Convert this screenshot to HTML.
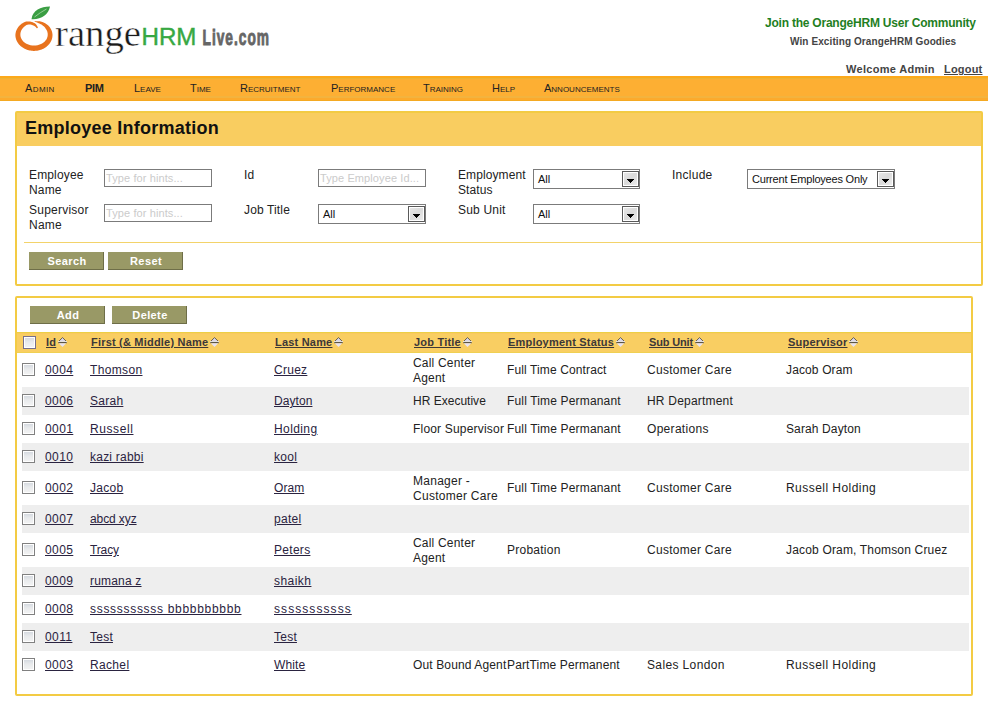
<!DOCTYPE html><html><head><meta charset="utf-8"><style>
*{margin:0;padding:0;box-sizing:border-box}
html,body{width:988px;height:704px;overflow:hidden;background:#fff;font-family:"Liberation Sans",sans-serif;color:#222}
.abs{position:absolute;white-space:nowrap}
.nav{position:absolute;left:0;top:76px;width:988px;height:25px;background:linear-gradient(180deg,#FDA91A 0,#FDA91A 2px,#EBB436 2px,#EBB436 3px,#FDAF33 3px,#FDAF33 20px,#F3B33E 20px,#F3B33E 22px,#FCAA2C 22px,#FCAA2C 24px,#F4A922 24px)}
.nv{position:absolute;top:83px;font-size:11px;font-variant:small-caps;color:#222;line-height:11px}
.box{position:absolute;border:2px solid #F3CB44;border-radius:2px;background:#fff}
.lbl{position:absolute;font-size:12px;line-height:15px;color:#222;white-space:nowrap;letter-spacing:0.1px}
.inp{position:absolute;height:18px;border:1px solid #7B7B7B;background:#fff;font-size:11px;color:#CBCBCB;padding-left:1px;letter-spacing:0.1px;line-height:16px;white-space:nowrap;overflow:hidden}
.sel{position:absolute;height:20px;border:1px solid #7B7B7B;background:#fff;font-size:11px;color:#111;white-space:nowrap}
.sel span{position:absolute;left:4px;top:4px;line-height:11px}
.sb{position:absolute;right:0;top:1px;width:17px;height:16px;border:1px solid #5A5A5A;background:linear-gradient(135deg,#E8E8E8,#DADADA 50%,#EEEEEE)}
.sb:before{content:"";position:absolute;left:0;top:0;right:0;bottom:0;border:1px solid #fff}
.sb svg{position:absolute;left:4px;top:7px}
.btn{position:absolute;height:18px;background:#999966;border-right:1px solid #6E6E48;border-bottom:1px solid #6E6E48;color:#fff;font-size:11px;font-weight:bold;text-align:center;line-height:19px;letter-spacing:0.4px;padding-left:2px}
.cb{position:absolute;width:13px;height:13px;border:1px solid #808080;background:linear-gradient(180deg,#D2D7DE,#E8EAEC 45%,#F4F4F4);box-shadow:inset 0 0 0 1px #fff}
.th{position:absolute;font-size:11px;font-weight:bold;text-decoration:underline;color:#3D3838;white-space:nowrap;line-height:11px;letter-spacing:0.2px}
.si{display:inline-block;width:9px;height:11px;vertical-align:-2px;margin-left:2px}
.row{position:absolute;left:17px;width:954px}
.td{position:absolute;font-size:12px;color:#222;white-space:nowrap;line-height:14px;letter-spacing:0.15px}
.lk{text-decoration:underline;color:#2A2340;letter-spacing:0.25px}
</style></head><body>
<svg class="abs" style="left:0;top:0" width="290" height="70" viewBox="0 0 290 70">
<path d="M34.57 21.36 L35.43 21.26 L36.30 21.20 L37.18 21.18 L38.06 21.20 L38.94 21.25 L39.82 21.35 L40.68 21.55 L41.53 21.78 L42.36 22.06 L43.18 22.37 L43.98 22.72 L44.76 23.11 L45.52 23.53 L46.25 23.99 L46.96 24.49 L47.65 25.02 L48.30 25.58 L48.91 26.19 L49.45 26.85 L49.96 27.53 L50.43 28.24 L50.86 28.97 L51.24 29.73 L51.57 30.51 L51.86 31.30 L52.09 32.11 L52.27 32.94 L52.41 33.77 L52.49 34.62 L52.49 35.47 L52.44 36.31 L52.34 37.16 L52.18 38.00 L51.96 38.82 L51.70 39.64 L51.39 40.44 L51.02 41.23 L50.61 41.99 L50.15 42.74 L49.65 43.46 L49.11 44.16 L48.52 44.82 L47.90 45.46 L47.24 46.07 L46.54 46.65 L45.81 47.20 L45.05 47.71 L44.26 48.19 L43.45 48.63 L42.61 49.03 L41.74 49.40 L40.86 49.72 L39.96 50.01 L39.05 50.26 L38.12 50.47 L37.18 50.64 L36.23 50.76 L35.28 50.85 L34.32 50.89 L33.36 50.89 L32.40 50.83 L31.45 50.73 L30.50 50.60 L29.57 50.42 L28.64 50.20 L27.73 49.94 L26.83 49.64 L25.95 49.30 L25.10 48.93 L24.26 48.52 L23.45 48.06 L22.67 47.58 L21.92 47.06 L21.19 46.50 L20.50 45.91 L19.85 45.29 L19.23 44.64 L18.66 43.97 L18.12 43.26 L17.63 42.53 L17.18 41.78 L16.78 41.00 L16.43 40.21 L16.13 39.40 L15.88 38.57 L15.68 37.74 L15.53 36.89 L15.44 36.04 L15.40 35.18 L15.43 34.33 L15.53 33.48 L15.68 32.64 L15.88 31.82 L16.13 31.01 L16.44 30.21 L16.79 29.43 L17.18 28.68 L17.63 27.95 L18.11 27.24 L18.64 26.56 L19.20 25.91 L19.80 25.28 L20.44 24.69 L21.11 24.13 L21.82 23.62 L22.56 23.14 L23.33 22.70 L24.12 22.30 L24.93 21.93 L26.05 21.57 L27.08 21.43 L28.09 21.39 L29.08 21.43 L30.05 21.54 L30.99 21.73 L31.90 21.98 L32.77 22.30 L33.61 22.67 L34.39 23.10 L35.11 23.59 L35.78 24.11 L36.34 24.74 L36.82 25.38 L37.22 26.06 L37.54 26.74 L37.77 27.43 L37.92 28.11 L36.68 28.13 L36.34 27.66 L35.95 27.22 L35.51 26.82 L35.02 26.44 L34.49 26.11 L33.94 25.77 L33.36 25.46 L32.74 25.18 L32.09 24.94 L31.40 24.76 L30.69 24.62 L29.96 24.53 L29.22 24.50 L28.48 24.53 L27.77 24.63 L27.10 24.79 L26.62 24.98 L26.07 25.32 L25.48 25.72 L24.92 26.14 L24.39 26.58 L23.89 27.04 L23.41 27.50 L22.96 27.98 L22.55 28.47 L22.17 28.97 L21.83 29.49 L21.53 30.02 L21.26 30.55 L21.02 31.09 L20.83 31.63 L20.67 32.18 L20.54 32.72 L20.46 33.27 L20.40 33.82 L20.38 34.36 L20.40 34.90 L20.42 35.44 L20.48 35.97 L20.57 36.51 L20.70 37.04 L20.86 37.56 L21.05 38.08 L21.28 38.59 L21.54 39.10 L21.83 39.59 L22.16 40.08 L22.52 40.55 L22.91 41.01 L23.34 41.46 L23.79 41.89 L24.27 42.30 L24.78 42.69 L25.32 43.06 L25.88 43.41 L26.47 43.74 L27.08 44.04 L27.71 44.32 L28.37 44.57 L29.03 44.79 L29.71 44.98 L30.41 45.14 L31.11 45.28 L31.83 45.38 L32.55 45.45 L33.27 45.49 L34.00 45.50 L34.73 45.49 L35.45 45.46 L36.17 45.39 L36.89 45.29 L37.59 45.16 L38.29 45.00 L38.97 44.81 L39.64 44.59 L40.30 44.34 L40.93 44.07 L41.54 43.77 L42.14 43.45 L42.70 43.10 L43.25 42.73 L43.76 42.34 L44.25 41.93 L44.71 41.50 L45.13 41.05 L45.53 40.59 L45.89 40.12 L46.23 39.63 L46.52 39.13 L46.79 38.63 L47.02 38.11 L47.22 37.59 L47.39 37.06 L47.52 36.52 L47.61 35.98 L47.67 35.44 L47.70 34.90 L47.72 34.35 L47.70 33.80 L47.65 33.25 L47.56 32.70 L47.43 32.15 L47.27 31.59 L47.07 31.04 L46.84 30.50 L46.57 29.96 L46.26 29.43 L45.91 28.91 L45.54 28.39 L45.16 27.86 L44.73 27.34 L44.27 26.84 L43.78 26.35 L43.25 25.88 L42.69 25.44 L42.09 25.01 L41.47 24.61 L40.81 24.23 L40.13 23.88 L39.43 23.56 L38.71 23.22 L37.98 22.90 L37.22 22.60 L36.44 22.34 L35.64 22.11 L34.83 21.92Z" fill="#E8731E"/>
<path d="M31.5 19.2 C 32.5 10.5, 41 6.5, 50 6.6 C 48.5 15, 41 19.8, 31.5 19.2 Z" fill="#3A9E43"/><path d="M34.5 17 Q 40 12.5, 46.5 9" stroke="#9ED39C" stroke-width="0.9" fill="none"/>
<text x="55" y="46" font-family="Liberation Serif" font-size="38" fill="#1a1a1a" stroke="#fff" stroke-width="0.45" textLength="86" lengthAdjust="spacingAndGlyphs">range</text>
<text x="141.5" y="45" font-family="Liberation Sans" font-size="23.5" fill="#37A843" stroke="#37A843" stroke-width="0.4" textLength="55" lengthAdjust="spacingAndGlyphs">HRM</text>
<text transform="translate(202.5 44.5) scale(0.64 1)" x="0" y="0" font-family="Liberation Sans" font-weight="bold" font-size="21.5" fill="#666" stroke="#666" stroke-width="0.9" textLength="104" lengthAdjust="spacing">Live.com</text>
</svg>
<div class="abs" style="left:765px;top:17px;font-size:12px;font-weight:bold;color:#1F801F;letter-spacing:-0.22px;line-height:12px">Join the OrangeHRM User Community</div>
<div class="abs" style="left:790px;top:37px;font-size:10px;font-weight:bold;color:#444;letter-spacing:0.1px;line-height:10px">Win Exciting OrangeHRM Goodies</div>
<div class="abs" style="left:846px;top:64px;font-size:11px;font-weight:bold;color:#444;letter-spacing:0.3px;line-height:11px">Welcome Admin</div>
<div class="abs" style="left:944px;top:64px;font-size:11px;font-weight:bold;color:#444;text-decoration:underline;letter-spacing:0.2px;line-height:11px">Logout</div>
<div class="nav"></div>
<div class="nv" style="left:25px"><span style="letter-spacing:0.4px">Admin</span></div>
<div class="nv" style="left:85px;font-variant:normal;font-weight:bold"><span style="letter-spacing:-0.3px">PIM</span></div>
<div class="nv" style="left:134px">Leave</div>
<div class="nv" style="left:190px">Time</div>
<div class="nv" style="left:240px">Recruitment</div>
<div class="nv" style="left:331px">Performance</div>
<div class="nv" style="left:423px">Training</div>
<div class="nv" style="left:492px">Help</div>
<div class="nv" style="left:544px">Announcements</div>
<div class="box" style="left:15px;top:111px;width:968px;height:175px;overflow:hidden"><div style="position:absolute;left:0;top:0;width:100%;height:33px;background:#F9CD60"></div></div>
<div class="abs" style="left:25px;top:119px;font-size:18px;font-weight:bold;color:#111;line-height:18px;letter-spacing:0.25px">Employee Information</div>
<div class="lbl" style="left:29px;top:168px;letter-spacing:0.15px">Employee<br>Name</div>
<div class="inp" style="left:104px;top:169px;width:108px">Type for hints...</div>
<div class="lbl" style="left:29px;top:203px;letter-spacing:0.23px">Supervisor<br>Name</div>
<div class="inp" style="left:104px;top:204px;width:108px">Type for hints...</div>
<div class="lbl" style="left:244px;top:168px;letter-spacing:0.07px">Id</div>
<div class="inp" style="left:318px;top:169px;width:108px">Type Employee Id...</div>
<div class="lbl" style="left:244px;top:203px;letter-spacing:0.14px">Job Title</div>
<div class="sel" style="left:318px;top:204px;width:108px"><span>All</span><div class="sb"><svg width="7" height="4"><path d="M0 0h7v1h-1v1h-1v1h-1v1h-1v-1h-1v-1h-1v-1h-1z" fill="#000"/></svg></div></div>
<div class="lbl" style="left:458px;top:168px;letter-spacing:0.10px">Employment<br>Status</div>
<div class="sel" style="left:533px;top:169px;width:107px"><span>All</span><div class="sb"><svg width="7" height="4"><path d="M0 0h7v1h-1v1h-1v1h-1v1h-1v-1h-1v-1h-1v-1h-1z" fill="#000"/></svg></div></div>
<div class="lbl" style="left:458px;top:203px;letter-spacing:0.19px">Sub Unit</div>
<div class="sel" style="left:533px;top:204px;width:107px"><span>All</span><div class="sb"><svg width="7" height="4"><path d="M0 0h7v1h-1v1h-1v1h-1v1h-1v-1h-1v-1h-1v-1h-1z" fill="#000"/></svg></div></div>
<div class="lbl" style="left:672px;top:168px;letter-spacing:0.26px">Include</div>
<div class="sel" style="left:747px;top:169px;width:148px"><span><i style="font-style:normal;letter-spacing:-0.2px">Current Employees Only</i></span><div class="sb"><svg width="7" height="4"><path d="M0 0h7v1h-1v1h-1v1h-1v1h-1v-1h-1v-1h-1v-1h-1z" fill="#000"/></svg></div></div>
<div class="abs" style="left:24px;top:242px;width:957px;height:1px;background:#F3D36A"></div>
<div class="btn" style="left:29px;top:252px;width:75px">Search</div>
<div class="btn" style="left:108px;top:252px;width:75px">Reset</div>
<div class="box" style="left:15px;top:296px;width:958px;height:400px"></div>
<div class="btn" style="left:30px;top:306px;width:75px">Add</div>
<div class="btn" style="left:112px;top:306px;width:75px">Delete</div>
<div class="row" style="top:332px;height:21px;background:linear-gradient(180deg,#EDCF45 0,#EDCF45 1px,#F9C95E 1px,#F9C95E 2px,#F9CE62 2px,#F9CE62 20px,#F0D052 20px)"></div>
<div class="cb" style="left:23px;top:336px;border-color:#76708C"></div>
<div class="th" style="left:46px;top:337px"><span>Id</span><svg class="si" viewBox="0 0 9 11" width="9" height="11"><path d="M4.5 0.6 L8.6 4.6 L0.4 4.6 Z" fill="#D9D6EA" stroke="#5A5040" stroke-width="0.9"/><rect x="0" y="4.2" width="9" height="1" fill="#fff"/><rect x="0.3" y="5.2" width="8.4" height="1" fill="#3A3A3A"/><path d="M0.8 6.2 L8.2 6.2 L4.5 10 Z" fill="#E6E2F2"/></svg></div>
<div class="th" style="left:91px;top:337px"><span>First (&amp; Middle) Name</span><svg class="si" viewBox="0 0 9 11" width="9" height="11"><path d="M4.5 0.6 L8.6 4.6 L0.4 4.6 Z" fill="#D9D6EA" stroke="#5A5040" stroke-width="0.9"/><rect x="0" y="4.2" width="9" height="1" fill="#fff"/><rect x="0.3" y="5.2" width="8.4" height="1" fill="#3A3A3A"/><path d="M0.8 6.2 L8.2 6.2 L4.5 10 Z" fill="#E6E2F2"/></svg></div>
<div class="th" style="left:275px;top:337px"><span>Last Name</span><svg class="si" viewBox="0 0 9 11" width="9" height="11"><path d="M4.5 0.6 L8.6 4.6 L0.4 4.6 Z" fill="#D9D6EA" stroke="#5A5040" stroke-width="0.9"/><rect x="0" y="4.2" width="9" height="1" fill="#fff"/><rect x="0.3" y="5.2" width="8.4" height="1" fill="#3A3A3A"/><path d="M0.8 6.2 L8.2 6.2 L4.5 10 Z" fill="#E6E2F2"/></svg></div>
<div class="th" style="left:414px;top:337px"><span>Job Title</span><svg class="si" viewBox="0 0 9 11" width="9" height="11"><path d="M4.5 0.6 L8.6 4.6 L0.4 4.6 Z" fill="#D9D6EA" stroke="#5A5040" stroke-width="0.9"/><rect x="0" y="4.2" width="9" height="1" fill="#fff"/><rect x="0.3" y="5.2" width="8.4" height="1" fill="#3A3A3A"/><path d="M0.8 6.2 L8.2 6.2 L4.5 10 Z" fill="#E6E2F2"/></svg></div>
<div class="th" style="left:508px;top:337px"><span>Employment Status</span><svg class="si" viewBox="0 0 9 11" width="9" height="11"><path d="M4.5 0.6 L8.6 4.6 L0.4 4.6 Z" fill="#D9D6EA" stroke="#5A5040" stroke-width="0.9"/><rect x="0" y="4.2" width="9" height="1" fill="#fff"/><rect x="0.3" y="5.2" width="8.4" height="1" fill="#3A3A3A"/><path d="M0.8 6.2 L8.2 6.2 L4.5 10 Z" fill="#E6E2F2"/></svg></div>
<div class="th" style="left:649px;top:337px"><span style="letter-spacing:-0.15px">Sub Unit</span><svg class="si" viewBox="0 0 9 11" width="9" height="11"><path d="M4.5 0.6 L8.6 4.6 L0.4 4.6 Z" fill="#D9D6EA" stroke="#5A5040" stroke-width="0.9"/><rect x="0" y="4.2" width="9" height="1" fill="#fff"/><rect x="0.3" y="5.2" width="8.4" height="1" fill="#3A3A3A"/><path d="M0.8 6.2 L8.2 6.2 L4.5 10 Z" fill="#E6E2F2"/></svg></div>
<div class="th" style="left:788px;top:337px"><span>Supervisor</span><svg class="si" viewBox="0 0 9 11" width="9" height="11"><path d="M4.5 0.6 L8.6 4.6 L0.4 4.6 Z" fill="#D9D6EA" stroke="#5A5040" stroke-width="0.9"/><rect x="0" y="4.2" width="9" height="1" fill="#fff"/><rect x="0.3" y="5.2" width="8.4" height="1" fill="#3A3A3A"/><path d="M0.8 6.2 L8.2 6.2 L4.5 10 Z" fill="#E6E2F2"/></svg></div>
<div class="cb" style="left:22px;top:363px"></div>
<div class="td lk" style="left:45px;top:363px;letter-spacing:0.40px">0004</div>
<div class="td lk" style="left:90px;top:363px;letter-spacing:0.35px">Thomson</div>
<div class="td lk" style="left:274px;top:363px;letter-spacing:0.27px">Cruez</div>
<div class="td" style="left:413px;top:356px;line-height:15px;letter-spacing:0.20px">Call Center<br>Agent</div>
<div class="td" style="left:507px;top:363px;letter-spacing:0.12px">Full Time Contract</div>
<div class="td" style="left:647px;top:363px;letter-spacing:0.27px">Customer Care</div>
<div class="td" style="left:786px;top:363px;letter-spacing:0.13px">Jacob Oram</div>
<div class="row" style="left:22px;width:947px;top:387px;height:28px;background:#EEEEEE"></div>
<div class="cb" style="left:22px;top:394px"></div>
<div class="td lk" style="left:45px;top:394px;letter-spacing:0.40px">0006</div>
<div class="td lk" style="left:90px;top:394px;letter-spacing:0.27px">Sarah</div>
<div class="td lk" style="left:274px;top:394px;letter-spacing:0.07px">Dayton</div>
<div class="td" style="left:413px;top:394px;letter-spacing:0.01px">HR Executive</div>
<div class="td" style="left:507px;top:394px;letter-spacing:0.16px">Full Time Permanant</div>
<div class="td" style="left:647px;top:394px;letter-spacing:0.20px">HR Department</div>
<div class="cb" style="left:22px;top:422px"></div>
<div class="td lk" style="left:45px;top:422px;letter-spacing:0.40px">0001</div>
<div class="td lk" style="left:90px;top:422px;letter-spacing:0.59px">Russell</div>
<div class="td lk" style="left:274px;top:422px;letter-spacing:0.40px">Holding</div>
<div class="td" style="left:413px;top:422px;letter-spacing:0.19px">Floor Supervisor</div>
<div class="td" style="left:507px;top:422px;letter-spacing:0.16px">Full Time Permanant</div>
<div class="td" style="left:647px;top:422px;letter-spacing:0.30px">Operations</div>
<div class="td" style="left:786px;top:422px;letter-spacing:0.12px">Sarah Dayton</div>
<div class="row" style="left:22px;width:947px;top:443px;height:28px;background:#EEEEEE"></div>
<div class="cb" style="left:22px;top:450px"></div>
<div class="td lk" style="left:45px;top:450px;letter-spacing:0.40px">0010</div>
<div class="td lk" style="left:90px;top:450px;letter-spacing:0.23px">kazi rabbi</div>
<div class="td lk" style="left:274px;top:450px;letter-spacing:0.32px">kool</div>
<div class="cb" style="left:22px;top:481px"></div>
<div class="td lk" style="left:45px;top:481px;letter-spacing:0.40px">0002</div>
<div class="td lk" style="left:90px;top:481px;letter-spacing:0.27px">Jacob</div>
<div class="td lk" style="left:274px;top:481px;letter-spacing:0.07px">Oram</div>
<div class="td" style="left:413px;top:474px;line-height:15px;letter-spacing:0.27px">Manager -<br>Customer Care</div>
<div class="td" style="left:507px;top:481px;letter-spacing:0.16px">Full Time Permanant</div>
<div class="td" style="left:647px;top:481px;letter-spacing:0.27px">Customer Care</div>
<div class="td" style="left:786px;top:481px;letter-spacing:0.45px">Russell Holding</div>
<div class="row" style="left:22px;width:947px;top:505px;height:28px;background:#EEEEEE"></div>
<div class="cb" style="left:22px;top:512px"></div>
<div class="td lk" style="left:45px;top:512px;letter-spacing:0.40px">0007</div>
<div class="td lk" style="left:90px;top:512px;letter-spacing:-0.10px">abcd xyz</div>
<div class="td lk" style="left:274px;top:512px;letter-spacing:0.27px">patel</div>
<div class="cb" style="left:22px;top:543px"></div>
<div class="td lk" style="left:45px;top:543px;letter-spacing:0.40px">0005</div>
<div class="td lk" style="left:90px;top:543px;letter-spacing:-0.13px">Tracy</div>
<div class="td lk" style="left:274px;top:543px;letter-spacing:0.29px">Peters</div>
<div class="td" style="left:413px;top:536px;line-height:15px;letter-spacing:0.20px">Call Center<br>Agent</div>
<div class="td" style="left:507px;top:543px;letter-spacing:0.25px">Probation</div>
<div class="td" style="left:647px;top:543px;letter-spacing:0.27px">Customer Care</div>
<div class="td" style="left:786px;top:543px;letter-spacing:0.17px">Jacob Oram, Thomson Cruez</div>
<div class="row" style="left:22px;width:947px;top:567px;height:28px;background:#EEEEEE"></div>
<div class="cb" style="left:22px;top:574px"></div>
<div class="td lk" style="left:45px;top:574px;letter-spacing:0.40px">0009</div>
<div class="td lk" style="left:90px;top:574px;letter-spacing:0.19px">rumana z</div>
<div class="td lk" style="left:274px;top:574px;letter-spacing:0.46px">shaikh</div>
<div class="cb" style="left:22px;top:602px"></div>
<div class="td lk" style="left:45px;top:602px;letter-spacing:0.40px">0008</div>
<div class="td lk" style="left:90px;top:602px;letter-spacing:0.70px">sssssssssss bbbbbbbbbb</div>
<div class="td lk" style="left:274px;top:602px;letter-spacing:1.07px">sssssssssss</div>
<div class="row" style="left:22px;width:947px;top:623px;height:28px;background:#EEEEEE"></div>
<div class="cb" style="left:22px;top:630px"></div>
<div class="td lk" style="left:45px;top:630px;letter-spacing:0.40px">0011</div>
<div class="td lk" style="left:90px;top:630px;letter-spacing:0.24px">Test</div>
<div class="td lk" style="left:274px;top:630px;letter-spacing:0.24px">Test</div>
<div class="cb" style="left:22px;top:658px"></div>
<div class="td lk" style="left:45px;top:658px;letter-spacing:0.40px">0003</div>
<div class="td lk" style="left:90px;top:658px;letter-spacing:0.34px">Rachel</div>
<div class="td lk" style="left:274px;top:658px;letter-spacing:0.14px">White</div>
<div class="td" style="left:413px;top:658px;letter-spacing:0.13px">Out Bound Agent</div>
<div class="td" style="left:507px;top:658px;letter-spacing:0.14px">PartTime Permanent</div>
<div class="td" style="left:647px;top:658px;letter-spacing:0.37px">Sales London</div>
<div class="td" style="left:786px;top:658px;letter-spacing:0.45px">Russell Holding</div>
</body></html>
